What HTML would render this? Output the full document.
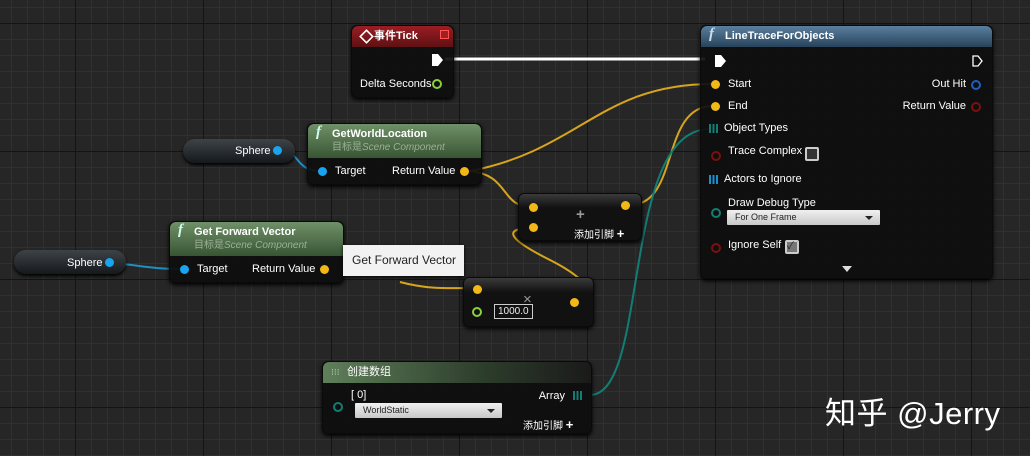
<!DOCTYPE html>
<html><head><meta charset="utf-8"><style>
body{margin:0;width:1030px;height:456px;overflow:hidden;background:#262626;font-family:"Liberation Sans","Noto Sans CJK SC",sans-serif;color:#ddd;font-size:11px;position:relative}
.grid{position:absolute;inset:0;background-image:
linear-gradient(#141414 1px,transparent 1px),linear-gradient(90deg,#141414 1px,transparent 1px),
linear-gradient(#303030 1px,transparent 1px),linear-gradient(90deg,#303030 1px,transparent 1px);
background-size:128px 128px,128px 128px,16px 16px,16px 16px;background-position:-53px -105px,-53px -105px,-5px -9px,-5px -9px}
.n{position:absolute;background:rgba(14,14,14,.93);border-radius:6px;box-shadow:0 2px 4px #000;border:1px solid #0a0a0a}
.h{height:21px;border-radius:6px 6px 0 0;color:#fff;font-weight:bold;font-size:11px;line-height:21px;padding-left:8px}
.t{position:absolute;white-space:nowrap}
.pin{position:absolute;width:9px;height:9px;border-radius:50%}
.y{background:#f2b816}.b{background:#19a4ef}
.var{position:absolute;height:24px;border-radius:12px;background:linear-gradient(#3d4347,#15191c);box-shadow:0 2px 3px #000;color:#fff;font-size:11px}
.dd{position:absolute;height:15px;background:linear-gradient(#f0f0f0,#c8c8c8);color:#222;font-size:9px;line-height:15px;padding-left:8px;border-radius:1px}
.dd:after{content:"";position:absolute;right:7px;top:6px;border:4px solid transparent;border-top:4px solid #222;border-bottom:none}
</style></head><body>
<div class="grid"></div>
<svg width="1030" height="456" style="position:absolute;left:0;top:0">
<g fill="none" stroke-width="2">
<path d="M445 59 L705 59" stroke="#fff" stroke-width="3"/>
<path d="M470 171 C580 150,600 84,713 84" stroke="#d6a51c"/>
<path d="M470 171 C510 175,500 207,532 207" stroke="#d6a51c"/>
<path d="M630 205 C680 205,660 106,713 106" stroke="#d6a51c"/>
<path d="M533 228 C500 228,510 240,550 260 S600 300,578 302" stroke="#d6a51c"/>
<path d="M400 282 C430 290,450 288,476 288" stroke="#d6a51c"/>
<path d="M290 152 C300 160,300 170,320 171" stroke="#1f8fc0"/>
<path d="M110 263 C140 265,150 269,182 269" stroke="#1f8fc0"/>
<path d="M590 395 C650 395,620 129,710 129" stroke="#137d74"/>
</g></svg>

<div class="n" style="left:351px;top:25px;width:101px;height:71px">
<div class="h" style="background:linear-gradient(#9b1d24,#5e1114);padding-left:22px">事件Tick</div>
<div class="t" style="left:8px;top:4px;width:9px;height:9px;border:2px solid #fff;transform:rotate(45deg) scale(.8)"></div>
<div class="t" style="right:4px;top:4px;width:7px;height:7px;border:1px solid #f55;background:#a02020"></div>
<svg class="t" style="left:80px;top:28px" width="12" height="12"><path d="M0 0H6L11 6L6 12H0Z" fill="#fff"/></svg>
<div class="t" style="left:8px;top:52px;color:#fff">Delta Seconds</div>
<div class="pin" style="left:80px;top:53px;border:2px solid #8bd03c;width:6px;height:6px"></div>
</div>

<div class="var" style="left:183px;top:139px;width:112px"><span class="t" style="left:52px;top:6px">Sphere</span><div class="pin b" style="left:90px;top:7px"></div></div>
<div class="var" style="left:14px;top:250px;width:112px"><span class="t" style="left:53px;top:7px">Sphere</span><div class="pin b" style="left:91px;top:8px"></div></div>

<div class="n" style="left:307px;top:123px;width:173px;height:60px">
<div class="h" style="background:linear-gradient(#6f9068,#385533);height:34px;line-height:20px;padding-left:24px">GetWorldLocation<div style="font-weight:normal;font-size:10px;color:#9bb096;line-height:8px">目标是<i>Scene Component</i></div></div>
<div class="t" style="left:8px;top:0;color:#cfe;font:italic bold 15px 'Liberation Serif'">f</div>
<div class="pin b" style="left:10px;top:43px"></div><div class="t" style="left:27px;top:41px;color:#fff">Target</div>
<div class="t" style="left:84px;top:41px;color:#fff">Return Value</div><div class="pin y" style="left:152px;top:43px"></div>
</div>

<div class="n" style="left:169px;top:221px;width:173px;height:60px">
<div class="h" style="background:linear-gradient(#6f9068,#385533);height:34px;line-height:20px;padding-left:24px">Get Forward Vector<div style="font-weight:normal;font-size:10px;color:#9bb096;line-height:8px">目标是<i>Scene Component</i></div></div>
<div class="t" style="left:8px;top:0;color:#cfe;font:italic bold 15px 'Liberation Serif'">f</div>
<div class="pin b" style="left:10px;top:43px"></div><div class="t" style="left:27px;top:41px;color:#fff">Target</div>
<div class="t" style="left:82px;top:41px;color:#fff">Return Value</div><div class="pin y" style="left:150px;top:43px"></div>
</div>
<div class="t" style="left:343px;top:245px;width:121px;height:31px;background:#f2f2f2;color:#222;font-size:12px;line-height:31px;text-indent:9px;box-shadow:0 1px 3px #000">Get Forward Vector</div>

<div class="n" style="left:518px;top:193px;width:122px;height:46px;background:linear-gradient(#3a3a3a,#111 30%,#111)">
<div class="pin y" style="left:10px;top:9px"></div><div class="pin y" style="left:10px;top:29px"></div>
<div class="pin y" style="left:102px;top:7px"></div>
<div class="t" style="left:57px;top:12px;color:#999;font-size:15px;font-weight:bold">+</div>
<div class="t" style="left:55px;top:32px;color:#fff;font-size:10px">添加引脚 <b style="font-size:13px">+</b></div>
</div>

<div class="n" style="left:463px;top:277px;width:129px;height:48px;background:linear-gradient(#3a3a3a,#111 30%,#111)">
<div class="pin y" style="left:9px;top:7px"></div>
<div class="pin" style="left:8px;top:29px;border:2px solid #8bd03c;width:6px;height:6px"></div>
<div class="t" style="left:30px;top:26px;border:1px solid #ccc;padding:1px 3px;color:#eee;font-size:10px">1000.0</div>
<div class="t" style="left:59px;top:13px;color:#999;font-size:15px">×</div>
<div class="pin y" style="left:106px;top:20px"></div>
</div>

<div class="n" style="left:700px;top:25px;width:291px;height:252px">
<div class="h" style="background:linear-gradient(#5a7f9f,#27435a);padding-left:24px">LineTraceForObjects</div>
<div class="t" style="left:8px;top:0;color:#cde;font:italic bold 15px 'Liberation Serif'">f</div>
<svg class="t" style="left:14px;top:29px" width="12" height="12"><path d="M0 0H6L11 6L6 12H0Z" fill="#fff"/></svg>
<svg class="t" style="left:271px;top:29px" width="12" height="12"><path d="M1 1H6L10 6L6 11H1Z" fill="none" stroke="#fff" stroke-width="1.3"/></svg>
<div class="pin y" style="left:10px;top:54px"></div><div class="t" style="left:27px;top:52px;color:#fff">Start</div>
<div class="pin y" style="left:10px;top:76px"></div><div class="t" style="left:27px;top:74px;color:#fff">End</div>
<div class="t" style="right:26px;top:52px;color:#fff">Out Hit</div><div class="pin" style="left:270px;top:54px;border:2px solid #1c5fc0;width:6px;height:6px"></div>
<div class="t" style="right:26px;top:74px;color:#fff">Return Value</div><div class="pin" style="left:270px;top:76px;border:2px solid #7a1010;width:6px;height:6px"></div>
<div class="t" style="left:8px;top:98px;width:9px;height:9px;background:repeating-linear-gradient(90deg,#137d74 0 2px,transparent 2px 3.5px)"></div><div class="t" style="left:23px;top:96px;color:#fff">Object Types</div>
<div class="pin" style="left:10px;top:125px;border:2px solid #7a1010;width:6px;height:6px"></div><div class="t" style="left:27px;top:119px;color:#fff">Trace Complex</div>
<div class="t" style="left:104px;top:121px;width:10px;height:10px;border:2px solid #ccc;border-radius:2px;background:#333"></div>
<div class="t" style="left:8px;top:149px;width:9px;height:9px;background:repeating-linear-gradient(90deg,#1a8fd0 0 2px,transparent 2px 3.5px)"></div><div class="t" style="left:23px;top:147px;color:#fff">Actors to Ignore</div>
<div class="pin" style="left:10px;top:182px;border:2px solid #137d74;width:6px;height:6px"></div><div class="t" style="left:27px;top:171px;color:#fff">Draw Debug Type</div>
<div class="dd" style="left:26px;top:184px;width:145px">For One Frame</div>
<div class="pin" style="left:10px;top:217px;border:2px solid #7a1010;width:6px;height:6px"></div><div class="t" style="left:27px;top:213px;color:#fff">Ignore Self</div>
<div class="t" style="left:84px;top:214px;width:10px;height:10px;border:2px solid #ccc;border-radius:2px;background:#777;color:#222;font-size:10px;line-height:10px">✓</div>
<div class="t" style="left:141px;top:240px;border:5px solid transparent;border-top:6px solid #ddd;border-bottom:none"></div>
</div>

<div class="n" style="left:322px;top:361px;width:268px;height:71px">
<div class="h" style="background:linear-gradient(90deg,#5f7f5a,#2d3d2b 60%,#1a1a1a);padding-left:24px;font-weight:normal">创建数组</div>
<div class="t" style="left:8px;top:5px;color:#ccc;font-size:9px">⁝⁝⁝</div>
<div class="pin" style="left:10px;top:40px;border:2px solid #137d74;width:6px;height:6px"></div>
<div class="t" style="left:28px;top:27px;color:#fff">[ 0]</div>
<div class="dd" style="left:32px;top:41px;width:139px">WorldStatic</div>
<div class="t" style="right:26px;top:28px;color:#fff">Array</div>
<div class="t" style="left:250px;top:29px;width:9px;height:9px;background:repeating-linear-gradient(90deg,#137d74 0 2px,transparent 2px 3.5px)"></div>
<div class="t" style="left:200px;top:55px;color:#fff;font-size:10px">添加引脚 <b style="font-size:13px">+</b></div>
</div>

<div class="t" style="left:825px;top:388px;color:#fff;font-size:31px;letter-spacing:0.5px">知乎 @Jerry</div>
</body></html>
